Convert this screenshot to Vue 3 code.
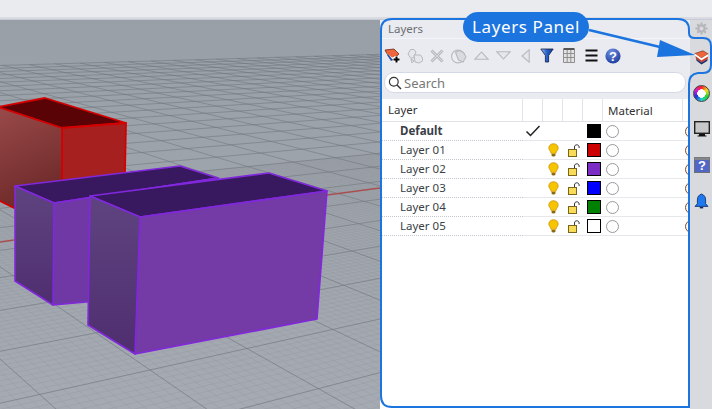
<script setup>
const rows = [
  { name: "Default", bold: true, current: true, color: "#000000" },
  { name: "Layer 01", color: "#cc0000" },
  { name: "Layer 02", color: "#7b2cc4" },
  { name: "Layer 03", color: "#0000ff" },
  { name: "Layer 04", color: "#008000" },
  { name: "Layer 05", color: "#ffffff" },
];

// ground grid, projected from the two vanishing points of the view
const vpU = [1755, 14];
const vpV = [-447, -41];
const origin = [150, 370];
const a = 0.0643;
const b = 0.0994;

const project = (u, v) => {
  const d = 1 + a * u + b * v;
  return [
    ((a * u * vpU[0] + b * v * vpV[0] + origin[0]) / d).toFixed(1),
    ((a * u * vpU[1] + b * v * vpV[1] + origin[1]) / d).toFixed(1),
  ];
};

const gridPath = (uMin, uMax, vMin, vMax, step) => {
  let d = "";
  const count = (max, min) => Math.round((max - min) / step);
  for (let i = 0; i <= count(uMax, uMin); i++) {
    const u = uMin + i * step;
    const start = Math.max(vMin, (0.12 - 1 - a * u) / b);
    const p = project(u, start);
    const q = project(u, vMax);
    d += `M${p[0]} ${p[1]}L${q[0]} ${q[1]}`;
  }
  for (let i = 0; i <= count(vMax, vMin); i++) {
    const v = vMin + i * step;
    const start = Math.max(uMin, (0.12 - 1 - b * v) / a);
    const p = project(start, v);
    const q = project(uMax, v);
    d += `M${p[0]} ${p[1]}L${q[0]} ${q[1]}`;
  }
  return d;
};

const majorGrid = gridPath(-13, 34, -6, 26, 1);
const minorGrid = gridPath(-13, 14, -6, 7, 0.1);
</script>

<template>
  <div class="app">
    <div class="topbar"></div>
    <div class="main">
      <div class="viewport">
        <svg class="scene" width="380" height="389" viewBox="0 20 380 389">
          <defs>
            <linearGradient id="redSide" x1="0" y1="0" x2="0.3" y2="1">
              <stop offset="0" stop-color="#9a4a4a" />
              <stop offset="1" stop-color="#6f2a2a" />
            </linearGradient>
            <linearGradient id="purpleSide" x1="0" y1="0" x2="0" y2="1">
              <stop offset="0" stop-color="#5f4380" />
              <stop offset="1" stop-color="#4f2e70" />
            </linearGradient>
          </defs>
          <path :d="minorGrid" class="grid-minor" />
          <path :d="majorGrid" class="grid-major" />
          <path d="M0 242L14 240M327 195L380 188" class="axis" />

          <path d="M-2 107L45 98L126 123L62 128Z" fill="#590306" class="edge-red" />
          <path d="M62 128L126 123L125 172L62 190Z" fill="#a62020" class="edge-red" />
          <path d="M-2 107L62 128L62 190L14 208L-2 200Z" fill="url(#redSide)" class="edge-red" />

          <path d="M15 186L180 166L218 178L54 203Z" fill="#38185f" class="edge-purple" />
          <path d="M54 203L218 178L218 290L53 305Z" fill="#7038a4" class="edge-purple" />
          <path d="M15 186L54 203L53 305L15 281Z" fill="url(#purpleSide)" class="edge-purple" />

          <path d="M90 196L269 173L327 191L140 217Z" fill="#38185f" class="edge-purple" />
          <path d="M140 217L327 191L317 319L135 354Z" fill="#743aa6" class="edge-purple" />
          <path d="M90 196L140 217L135 354L88 325Z" fill="url(#purpleSide)" class="edge-purple" />
        </svg>
      </div>

      <div class="panel">
        <div class="panel-title">Layers</div>
        <div class="toolbar">
          <span class="tool">
            <svg width="18" height="18" viewBox="0 0 18 18">
              <path d="M1 3L10 2L15 7L8 13L2.5 6Z" fill="#f0663c" stroke="#6b2a18" stroke-width="0.8" />
              <path d="M2.5 6L8 13L13 9L8 10.5Z" fill="#fff" />
              <path d="M3 8L7 14L9 13L4 7Z" fill="#2a4fa8" />
              <path d="M12.5 9V16M9 12.5H16" stroke="#fff" stroke-width="4" />
              <path d="M12.5 9.5V15.5M9.5 12.5H15.5" stroke="#000" stroke-width="2" />
            </svg>
          </span>
          <span class="tool">
            <svg width="16" height="16" viewBox="0 0 16 16" fill="#e6e7ea" stroke="#b6b9be" stroke-width="1">
              <path d="M1 6L3.5 1.5H7L9 4L6.5 10H3.5Z" />
              <path d="M7 7H13.5L15.5 10V13L12 15L8 14Z" />
              <path d="M4 11L5 15L7 13Z" />
            </svg>
          </span>
          <span class="tool">
            <svg width="14" height="14" viewBox="0 0 14 14">
              <path d="M1.5 1.5L12.5 12.5M12.5 1.5L1.5 12.5" stroke="#b9bcc1" stroke-width="3" />
              <path d="M1.5 1.5L12.5 12.5M12.5 1.5L1.5 12.5" stroke="#d6d8dc" stroke-width="1" />
            </svg>
          </span>
          <span class="tool">
            <svg width="16" height="16" viewBox="0 0 16 16" fill="#eceDf0" stroke="#b6b9be" stroke-width="1.1">
              <circle cx="7" cy="8.5" r="6.4" />
              <path d="M4.5 4.5L8 2.5L12.5 4.5L15 9L12 14L7.5 12Z" fill="#d9dbdf" />
            </svg>
          </span>
          <span class="tool">
            <svg width="15" height="9" viewBox="0 0 15 9">
              <path d="M.8 8.3H14.2L7.5 1Z" fill="#e6e7ea" stroke="#b6b9be" stroke-width="1.1" />
            </svg>
          </span>
          <span class="tool">
            <svg width="15" height="9" viewBox="0 0 15 9">
              <path d="M.8 .7H14.2L7.5 8Z" fill="#e6e7ea" stroke="#b6b9be" stroke-width="1.1" />
            </svg>
          </span>
          <span class="tool">
            <svg width="9" height="14" viewBox="0 0 9 14">
              <path d="M8.2 .8V13.2L1 7Z" fill="#e6e7ea" stroke="#b6b9be" stroke-width="1.1" />
            </svg>
          </span>
          <span class="tool">
            <svg width="14" height="15" viewBox="0 0 14 15">
              <defs>
                <linearGradient id="funnel" x1="0" y1="0" x2="1" y2="0">
                  <stop offset="0" stop-color="#9fc0ee" />
                  <stop offset="0.5" stop-color="#2460c8" />
                  <stop offset="1" stop-color="#143c90" />
                </linearGradient>
              </defs>
              <path d="M.8 1H13.2L8.6 7.5V14H5.4V7.5Z" fill="url(#funnel)" stroke="#10204a" stroke-width="0.8" />
            </svg>
          </span>
          <span class="tool">
            <svg width="12" height="15" viewBox="0 0 12 15" fill="none" stroke="#8f8f8f" stroke-width="1">
              <path d="M.5 1.5H11.5V14.5H.5ZM4.2 1.5V14.5M7.8 1.5V14.5M.5 5.5H11.5M.5 9.5H11.5" fill="#e3e3e3" />
              <path d="M.5 1H11.5" stroke="#555" stroke-width="2" />
            </svg>
          </span>
          <span class="tool">
            <svg width="13" height="13" viewBox="0 0 13 13">
              <path d="M.5 1.5H12.5M.5 6.5H12.5M.5 11.5H12.5" stroke="#111" stroke-width="2" />
            </svg>
          </span>
          <span class="tool">
            <svg width="16" height="16" viewBox="0 0 16 16">
              <defs>
                <radialGradient id="helpBall" cx="0.4" cy="0.25" r="0.8">
                  <stop offset="0" stop-color="#6f8fe0" />
                  <stop offset="1" stop-color="#1c3a9c" />
                </radialGradient>
              </defs>
              <circle cx="8" cy="8" r="7.6" fill="url(#helpBall)" />
              <text x="8" y="12.6" text-anchor="middle" class="help-mark">?</text>
            </svg>
          </span>
        </div>

        <div class="search">
          <svg width="14" height="14" viewBox="0 0 14 14" fill="none" stroke="#333" stroke-width="1.2">
            <circle cx="5.8" cy="5.8" r="4.4" />
            <path d="M9 9L13 13" stroke-width="1.5" />
          </svg>
          <span>Search</span>
        </div>

        <div class="table">
          <div class="row header">
            <div class="cell name">Layer</div>
            <div class="cell small"></div>
            <div class="cell small"></div>
            <div class="cell small"></div>
            <div class="cell small"></div>
            <div class="cell material">Material</div>
            <div class="cell last"></div>
          </div>
          <div v-for="row in rows" :key="row.name" class="row">
            <div class="cell name layer-name" :class="{ bold: row.bold }">{{ row.name }}</div>
            <div class="cell small">
              <svg v-if="row.current" width="16" height="12" viewBox="0 0 16 12" fill="none" stroke="#222" stroke-width="1.5">
                <path d="M1.5 6.5L5.5 10.5L14.5 1" />
              </svg>
            </div>
            <div class="cell small">
              <svg v-if="!row.current" class="bulb" width="11" height="14" viewBox="0 0 11 14">
                <path d="M5.5 .7C8.2 .7 10.2 2.6 10.2 5C10.2 7 8.4 8 7.8 10.4H3.2C2.6 8 .8 7 .8 5C.8 2.6 2.8 .7 5.5 .7Z" fill="#f7c400" stroke="#c48a00" stroke-width="0.7" />
                <path d="M3.6 11H7.4V12.4L6.4 13.4H4.6L3.6 12.4Z" fill="#8a6a10" />
              </svg>
            </div>
            <div class="cell small">
              <svg v-if="!row.current" class="lock" width="13" height="13" viewBox="0 0 13 13">
                <path d="M6.5 6V3C6.5 1.6 7.5 .8 8.8 .8C10.1 .8 11.1 1.6 11.1 3V4" fill="none" stroke="#333" stroke-width="1" />
                <rect x="0.5" y="5.5" width="8" height="7" fill="#f8dc58" stroke="#7a6420" />
              </svg>
            </div>
            <div class="cell small swatch-cell">
              <span class="swatch" :style="{ background: row.color }"></span>
            </div>
            <div class="cell material dot-cell">
              <span class="material-dot"></span>
            </div>
            <div class="cell last">
              <span class="clipped-dot"></span>
            </div>
          </div>
          <div class="table-rest"></div>
        </div>
      </div>

      <div class="tabs">
        <div class="tab gear">
          <svg width="13" height="13" viewBox="0 0 14 14">
            <circle cx="7" cy="7" r="3.4" fill="none" stroke="#b4b6ba" stroke-width="2.4" />
            <path d="M7 .5V3M7 11V13.5M.5 7H3M11 7H13.5M2.4 2.4L4.1 4.1M9.9 9.9L11.6 11.6M2.4 11.6L4.1 9.9M9.9 4.1L11.6 2.4" stroke="#b4b6ba" stroke-width="2.2" />
          </svg>
        </div>
        <div class="tab">
          <svg width="15" height="15" viewBox="0 0 15 15">
            <path d="M.8 3.5L9 .8L14.2 4L7.5 8.3Z" fill="#f0663c" stroke="#5a2a1a" stroke-width="0.6" />
            <path d="M.8 3.5L7.5 8.3L14.2 4L14 6.4L7.5 10.4L1.4 6Z" fill="#fff" />
            <path d="M1.4 6L7.5 10.4L14 6.4L13.6 9L7.5 12.6L2 8.4Z" fill="#d23a20" />
            <path d="M2 8.4L7.5 12.6L13.6 9L13.2 11L7.5 14.4L2.6 10.8Z" fill="#1f2f6a" />
          </svg>
        </div>
        <div class="tab">
          <span class="wheel"></span>
        </div>
        <div class="tab">
          <svg width="16" height="16" viewBox="0 0 16 16">
            <rect x="0.7" y="0.7" width="14.6" height="11.6" fill="#c8c8c8" stroke="#222" stroke-width="1.4" />
            <path d="M5 13H11V14.5H12.5V15.5H3.5V14.5H5Z" fill="#111" />
          </svg>
        </div>
        <div class="tab">
          <svg width="16" height="16" viewBox="0 0 16 16">
            <rect x="0.5" y="0.5" width="15" height="15" fill="#5066c8" stroke="#6e7076" />
            <rect x="0.5" y="0.5" width="15" height="2.5" fill="#84868c" />
            <text x="8" y="13.4" text-anchor="middle" class="help-mark">?</text>
          </svg>
        </div>
        <div class="tab">
          <svg width="15" height="16" viewBox="0 0 15 16">
            <path d="M7.5 1C10.4 2 11.6 4 11.6 7V10.6L14 13.4H1L3.4 10.6V7C3.4 4 4.6 2 7.5 1Z" fill="#1e78ee" stroke="#0a2a66" stroke-width="0.8" />
            <path d="M5.8 14H9.2V15.4H5.8Z" fill="#0a2a66" />
          </svg>
        </div>
      </div>
    </div>

    <!-- annotation drawn over the panel -->
    <svg class="outline" width="712" height="409" viewBox="0 0 712 409">
      <path d="M392 19H678Q689 19 689 30V33Q689 38 695 38H703Q711 38 711 46V65Q711 73 703 73H698Q689 74 689 84V407H392Q381 407 381 396V30Q381 19 392 19Z" fill="none" stroke="#1c74de" stroke-width="2" />
      <path d="M589 30L660 47" stroke="#1c74de" stroke-width="2.4" />
      <path d="M660 40L695 55L657 57Z" fill="#1c74de" />
    </svg>
    <div class="callout">Layers Panel</div>
  </div>
</template>

<style scoped>
.app {
  position: relative;
  width: 712px;
  height: 409px;
  overflow: hidden;
  background: #e9ebef;
  font-family: "Noto Sans", "Open Sans", sans-serif;
  font-size: 11.5px;
  color: #333;
}

.topbar {
  height: 20px;
  background: linear-gradient(#e9ebef 0 17px, #d9dbe1 17px 19px, #c6c9d8 19px);
}

.main {
  display: flex;
  height: 389px;
}

.viewport {
  flex: 0 0 380px;
  background: linear-gradient(#989fa6, #a6abb3);
  overflow: hidden;
}

.scene {
  display: block;
}

.grid-major {
  fill: none;
  stroke: #6f747b;
  stroke-width: 1;
  stroke-opacity: 0.55;
}

.grid-minor {
  fill: none;
  stroke: #8d9299;
  stroke-width: 0.6;
  stroke-opacity: 0.45;
}

.axis {
  fill: none;
  stroke: #a85050;
  stroke-width: 1.4;
}

.edge-red {
  stroke: #d40000;
  stroke-width: 1.8;
  stroke-linejoin: round;
}

.edge-purple {
  stroke: #8128dc;
  stroke-width: 1.6;
  stroke-linejoin: round;
}

.panel {
  flex: 0 0 310px;
  min-width: 0;
  display: flex;
  flex-direction: column;
  background: #e9ebf0;
}

.panel-title {
  height: 18px;
  line-height: 17px;
  padding-left: 8px;
  color: #6c6e72;
  border-bottom: 1px solid #f4f5f8;
}

.toolbar {
  height: 32px;
  display: flex;
  align-items: center;
  padding: 1px 0 0 2px;
  box-sizing: border-box;
}

.tool {
  flex: 0 0 22px;
  display: flex;
  justify-content: center;
  align-items: center;
}

.help-mark {
  font-family: "Liberation Sans", sans-serif;
  font-size: 13px;
  font-weight: 700;
  fill: #fff;
}

.search {
  height: 21px;
  margin: 1px 3px 6px 4px;
  display: flex;
  align-items: center;
  gap: 2px;
  padding-left: 3px;
  background: #fff;
  border: 1px solid #d5d9e6;
  border-radius: 10px;
  color: #777;
  font-size: 13px;
  box-sizing: border-box;
  width: 302px;
}

.table {
  flex: 1;
  min-width: 0;
  display: flex;
  flex-direction: column;
  background: #fff;
}

.row {
  display: flex;
  height: 19px;
  min-width: 0;
}

.row.header {
  height: 23px;
  background: #fff;
  border-bottom: 1px solid #dfe2e8;
  box-sizing: border-box;
}

.cell {
  display: flex;
  align-items: center;
  box-sizing: border-box;
  border-bottom: 1px solid #e6e8ec;
}

.header .cell {
  border-bottom: 0;
  border-right: 1px solid #e2e4ea;
}

.name {
  flex: 0 0 143px;
  padding-left: 8px;
  padding-bottom: 1px;
}

.layer-name {
  padding-left: 20px;
  border-bottom: 1px dotted #c4c8ce;
  color: #3a3f47;
}

.bold {
  font-weight: 700;
}

.small {
  flex: 0 0 20px;
  justify-content: center;
}

.material {
  flex: 0 0 80px;
  padding-left: 5px;
}

.dot-cell {
  padding-left: 3px;
}

.last {
  flex: 1 1 0;
  min-width: 0;
  overflow: hidden;
}

.header .last {
  border-right: 0;
}

.swatch {
  display: block;
  flex: none;
  width: 14px;
  height: 14px;
  margin-left: 2px;
  box-sizing: border-box;
  border: 1px solid #000;
}

.lock {
  margin-left: 3px;
}

.material-dot {
  display: block;
  width: 13px;
  height: 13px;
  box-sizing: border-box;
  border: 1.3px solid #999;
  border-radius: 50%;
  background: #fff;
}

.clipped-dot {
  display: block;
  flex: none;
  width: 13px;
  height: 13px;
  margin-left: 2px;
  box-sizing: border-box;
  border: 1.5px solid #7a4a30;
  border-radius: 50%;
  background: #fff;
}

.table-rest {
  flex: 1;
}

.tabs {
  flex: 1;
  min-width: 0;
  display: flex;
  flex-direction: column;
  align-items: center;
  background: #d8dade;
  padding-left: 1px;
}

.tab {
  flex: 0 0 36px;
  display: flex;
  align-items: center;
  justify-content: center;
}

.tab.gear {
  flex-basis: 16px;
  margin-bottom: 3px;
}

.wheel {
  display: block;
  width: 15px;
  height: 15px;
  border: 1px solid #444;
  border-radius: 50%;
  background:
    radial-gradient(circle, #fff 0 38%, transparent 42%),
    conic-gradient(#ff2020, #f4e020, #20d030, #20d0d0, #2030e0, #d020d0, #ff2020);
}

.outline {
  position: absolute;
  top: 0;
  left: 0;
  pointer-events: none;
}

.callout {
  position: absolute;
  top: 12px;
  left: 463px;
  width: 126px;
  height: 30px;
  line-height: 30px;
  text-align: center;
  border-radius: 15px;
  background: #1c74de;
  color: #fff;
  font-size: 17px;
  letter-spacing: 0.6px;
}
</style>
